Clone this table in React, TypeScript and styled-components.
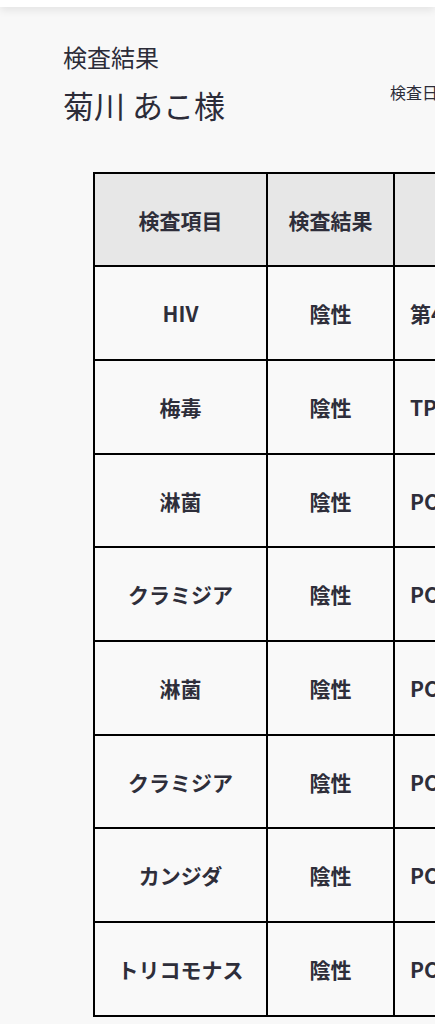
import React from "react";
import styled, { createGlobalStyle } from "styled-components";

const Global = createGlobalStyle`
  html, body { margin: 0; padding: 0; background: #f8f8f8; overflow: hidden; }
  body { font-family: "Noto Sans CJK JP", "Noto Sans", sans-serif; color: #2c2c38; }
`;

const TopBar = styled.header`
  height: 7px;
  background: #ffffff;
  box-shadow: 0 2px 10px rgba(0, 0, 0, 0.12);
  position: relative;
  z-index: 1;
`;

const Page = styled.main`
  width: 900px;
  padding: 36px 0 0 63px;
`;

const Heading = styled.div`
  display: flex;
  align-items: flex-start;
`;

const TitleBlock = styled.div`
  width: 327px;
`;

const Title = styled.h1`
  margin: 0;
  font-size: 24px;
  font-weight: 400;
  line-height: 1.2;
`;

const Name = styled.h2`
  margin: 11px 0 0;
  font-size: 31px;
  font-weight: 400;
  line-height: 1.45;
`;

const DateText = styled.div`
  margin-top: 37px;
  font-size: 16px;
  line-height: 1.5;
  white-space: nowrap;
`;

const Table = styled.table`
  margin: 44px 0 0 30px;
  border-collapse: collapse;
  table-layout: fixed;
  width: 560px;
  color: #2e2e3a;
`;

const Cell = styled.td<{ $head?: boolean; $left?: boolean }>`
  border: 2px solid #000;
  background: ${(p) => (p.$head ? "#e7e7e7" : "#f9f9f9")};
  height: 93.67px;
  padding: 0 16px 0 ${(p) => (p.$left ? "15px" : "16px")};
  box-sizing: border-box;
  font-size: 21px;
  font-weight: 700;
  text-align: ${(p) => (p.$left ? "left" : "center")};
  white-space: nowrap;
  overflow: hidden;
`;

const rows = [
  ["HIV", "陰性", "第4世代抗原抗体検査"],
  ["梅毒", "陰性", "TPHA法"],
  ["淋菌", "陰性", "PCR法"],
  ["クラミジア", "陰性", "PCR法"],
  ["淋菌", "陰性", "PCR法"],
  ["クラミジア", "陰性", "PCR法"],
  ["カンジダ", "陰性", "PCR法"],
  ["トリコモナス", "陰性", "PCR法"],
];

export default function App() {
  return (
    <>
      <Global />
      <TopBar />
      <Page>
        <Heading>
          <TitleBlock>
            <Title>検査結果</Title>
            <Name>菊川 あこ様</Name>
          </TitleBlock>
          <DateText>検査日：2024年1月15日</DateText>
        </Heading>
        <Table>
          <colgroup>
            <col style={{ width: 173 }} />
            <col style={{ width: 127 }} />
            <col style={{ width: 260 }} />
          </colgroup>
          <thead>
            <tr>
              <Cell as="th" $head>検査項目</Cell>
              <Cell as="th" $head>検査結果</Cell>
              <Cell as="th" $head>検査方法</Cell>
            </tr>
          </thead>
          <tbody>
            {rows.map((r, i) => (
              <tr key={i}>
                <Cell>{r[0]}</Cell>
                <Cell>{r[1]}</Cell>
                <Cell $left>{r[2]}</Cell>
              </tr>
            ))}
          </tbody>
        </Table>
      </Page>
    </>
  );
}
